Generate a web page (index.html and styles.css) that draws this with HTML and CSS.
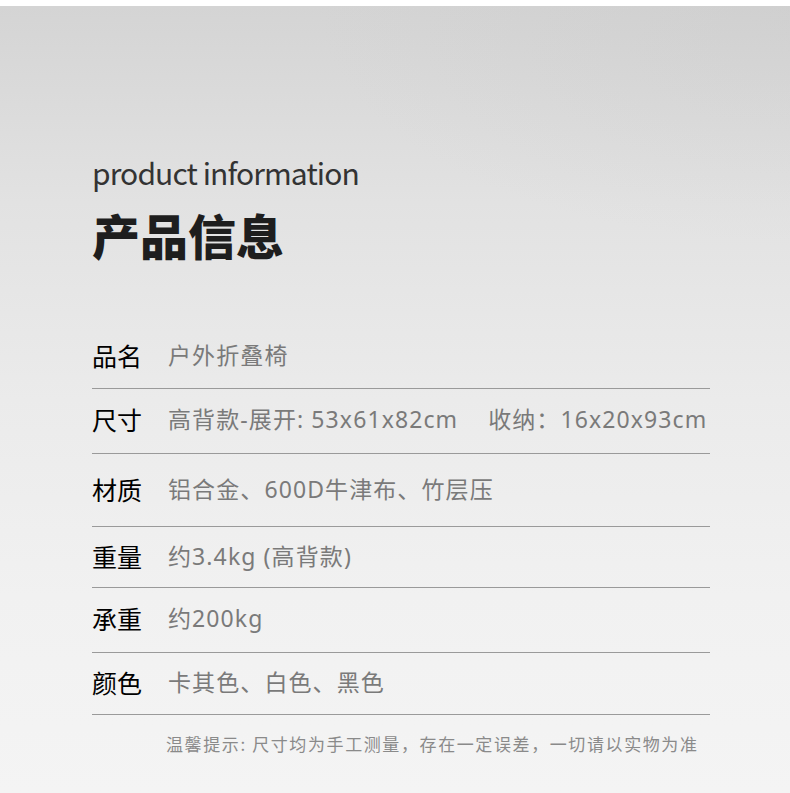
FILE: index.html
```html
<!DOCTYPE html>
<html lang="zh-CN">
<head>
<meta charset="utf-8">
<title>产品信息</title>
<link rel="stylesheet" href="styles.css">
</head>
<body>
<div class="page">
  <header class="head">
    <div class="en-title">product information</div>
    <h1 class="cn-title">产品信息</h1>
  </header>
  <div class="table">
    <div class="row row-first">
      <span class="label">品名</span><span class="value">户外折叠椅</span>
    </div>
    <div class="row">
      <span class="label">尺寸</span><span class="value">高背款-展开: 53x61x82cm<span class="gap"></span>收纳：16x20x93cm</span>
    </div>
    <div class="row row-tall">
      <span class="label">材质</span><span class="value">铝合金、600D牛津布、竹层压</span>
    </div>
    <div class="row row-short">
      <span class="label">重量</span><span class="value">约3.4kg (高背款)</span>
    </div>
    <div class="row">
      <span class="label">承重</span><span class="value">约200kg</span>
    </div>
    <div class="row row-last">
      <span class="label">颜色</span><span class="value">卡其色、白色、黑色</span>
    </div>
  </div>
  <p class="note">温馨提示: 尺寸均为手工测量，存在一定误差，一切请以实物为准</p>
</div>
</body>
</html>
```

FILE: styles.css
```css
html, body {
  margin: 0;
  padding: 0;
  background: #ffffff;
}

.page {
  margin-top: 6px;
  height: 787px;
  box-sizing: border-box;
  padding: 0 80px 0 92px;
  background:
    radial-gradient(ellipse 60% 30% at 100% 0%, rgba(195,195,195,0.25), rgba(195,195,195,0) 100%),
    linear-gradient(180deg, #d4d4d4 0%, #e2e2e2 25%, #ebebeb 50%, #f1f1f1 75%, #f4f4f4 100%);
  font-family: "Noto Sans", "Noto Sans CJK SC", sans-serif;
  overflow: hidden;
}

.head {
  padding-top: 146px;
}

.en-title {
  font-family: "Noto Sans CJK SC", sans-serif;
  font-size: 30px;
  line-height: 40px;
  color: #333333;
  font-weight: 400;
  letter-spacing: -0.9px;
}

.cn-title {
  margin: 12px 0 0 0;
  font-family: "Noto Sans CJK SC", sans-serif;
  font-size: 48px;
  line-height: 60px;
  font-weight: 900;
  color: #1e1e1e;
}

.table {
  margin-top: 65px;
  width: 618px;
}

.row {
  display: flex;
  align-items: center;
  height: 65px;
  box-sizing: border-box;
  border-bottom: 1px solid #9a9a9a;
  padding-bottom: 4px;
}

.row-first {
  height: 60px;
  padding-bottom: 8px;
}

.row-tall {
  height: 73px;
  padding-bottom: 2px;
}

.row-short {
  height: 61px;
  padding-bottom: 2px;
}

.row-last {
  height: 62px;
  padding-bottom: 4px;
}

.label {
  width: 76px;
  flex: none;
  font-family: "Noto Sans CJK SC", sans-serif;
  font-size: 25px;
  font-weight: 400;
  color: #000000;
  line-height: 30px;
}

.value {
  font-family: "Noto Sans", "Noto Sans CJK SC", sans-serif;
  font-size: 23px;
  color: #7a7a7a;
  line-height: 30px;
  letter-spacing: 1.1px;
  white-space: nowrap;
}

.gap {
  display: inline-block;
  width: 30px;
}

.note {
  margin: 19px 0 0 74px;
  font-family: "Noto Sans CJK SC", sans-serif;
  font-size: 17px;
  line-height: 20px;
  color: #8a8a8a;
  letter-spacing: 1.6px;
}
```
